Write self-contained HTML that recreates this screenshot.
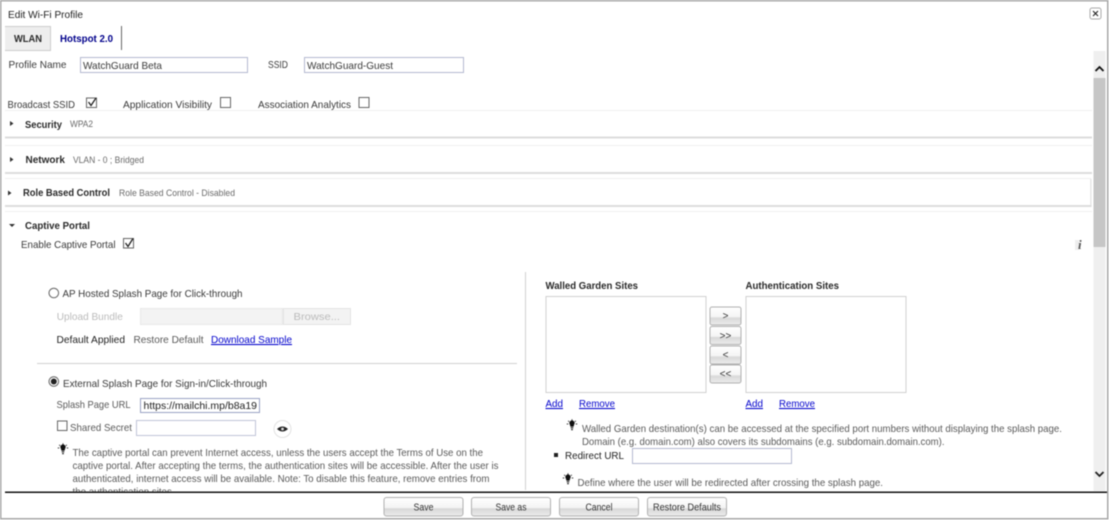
<!DOCTYPE html>
<html><head><meta charset="utf-8"><style>
html,body{margin:0;padding:0;background:#fff;width:1109px;height:520px;overflow:hidden}
svg{display:block;filter:blur(.45px)}
text{font-family:"Liberation Sans",sans-serif;font-size:10.500px;fill:#3a3a3a}
.b{font-weight:bold;fill:#2a2a2a}
.s{font-size:9.500px;fill:#6a6a6a}
.d{fill:#bbb}
.l{fill:#0000cc;text-decoration:underline}
.h{fill:#5a5a5a}
.bt{fill:#333;font-size:10px}
</style></head><body>
<svg width="1109" height="520" viewBox="0 0 1109 520" xmlns="http://www.w3.org/2000/svg">
<defs>
<linearGradient id="g" x1="0" y1="0" x2="0" y2="1"><stop offset="0" stop-color="#fff"/><stop offset=".56" stop-color="#f4f4f4"/><stop offset=".6" stop-color="#d8d8d8"/><stop offset="1" stop-color="#ececec"/></linearGradient>
<g id="bulb"><path d="M-2.200 -2.500a2.600 2.600 0 1 1 4.400 0l-.7 2.200h-3z" fill="#111"/><rect x="-1.300" y="0.300" width="2.600" height="1" fill="#111"/><rect x="-.8" y="2" width="1.600" height="1.200" fill="#111"/><path d="M-5.200 -3h1.400M3.800 -3h1.400M-3.800 -6.200l.9 1M3.800 -6.200l-.9 1M0 -7.800v1.300" stroke="#333" stroke-width=".9"/></g>
</defs>
<rect width="1109" height="520" fill="#fff"/>
<rect x=".75" y=".75" width="1107" height="518" fill="none" stroke="#a8a8a8" stroke-width="1.500"/>
<text x="8" y="18" textLength="75" lengthAdjust="spacingAndGlyphs" style="fill:#222">Edit Wi-Fi Profile</text>
<rect x="1090" y="8" width="11" height="11" rx="2" fill="#fff" stroke="#aaa"/>
<path d="M1093 11l5 5M1098 11l-5 5" stroke="#222" stroke-width="1.100"/>
<rect x="5" y="26" width="46" height="24.500" fill="#eee"/><path d="M5 26.500h46M50.500 26v24" stroke="#ccc"/>
<path d="M5 50.500h46" stroke="#ccc"/>
<text x="14" y="42" class="b" textLength="28" lengthAdjust="spacingAndGlyphs">WLAN</text>
<text x="60" y="42" class="b" textLength="53" lengthAdjust="spacingAndGlyphs" style="fill:#00008b">Hotspot 2.0</text>
<path d="M121.500 26v24" stroke="#666"/>
<text x="8.500" y="68" textLength="58" lengthAdjust="spacingAndGlyphs">Profile Name</text>
<rect x="80.500" y="57.500" width="167" height="15" fill="#fff" stroke="#b4b9d0"/>
<text x="83" y="69" textLength="79" lengthAdjust="spacingAndGlyphs">WatchGuard Beta</text>
<text x="268" y="68" textLength="20" lengthAdjust="spacingAndGlyphs">SSID</text>
<rect x="304.500" y="57.500" width="159" height="15" fill="#fff" stroke="#b4b9d0"/>
<text x="307" y="69" textLength="86" lengthAdjust="spacingAndGlyphs">WatchGuard-Guest</text>
<text x="7.500" y="108" textLength="67.500" lengthAdjust="spacingAndGlyphs">Broadcast SSID</text>
<rect x="86.500" y="98" width="10" height="9.500" fill="#fff" stroke="#666"/><path d="M88.500 102l2.500 3.500 5-7.500" fill="none" stroke="#222" stroke-width="1.300"/>
<text x="123" y="108" textLength="89" lengthAdjust="spacingAndGlyphs">Application Visibility</text>
<rect x="220.500" y="97.500" width="10" height="10" fill="#fff" stroke="#666"/>
<text x="258" y="108" textLength="93" lengthAdjust="spacingAndGlyphs">Association Analytics</text>
<rect x="359" y="97.500" width="10" height="10" fill="#fff" stroke="#666"/>
<path d="M5 110.500h1087" stroke="#f0f0f0"/>
<path d="M10 121l3.500 2.500-3.500 2.500z" fill="#333"/>
<text x="25" y="128" class="b" textLength="37" lengthAdjust="spacingAndGlyphs">Security</text>
<text x="70" y="127" class="s" textLength="23" lengthAdjust="spacingAndGlyphs">WPA2</text>
<rect x="5" y="136.500" width="1087" height="2" fill="#dcdcdc"/>
<path d="M5 145.500h1087" stroke="#f0f0f0"/>
<path d="M10 157l3.500 2.500-3.500 2.500z" fill="#333"/>
<text x="25.500" y="163" class="b" textLength="39.500" lengthAdjust="spacingAndGlyphs">Network</text>
<text x="73" y="163" class="s" textLength="71" lengthAdjust="spacingAndGlyphs">VLAN - 0 ; Bridged</text>
<rect x="5" y="172" width="1087" height="2" fill="#dcdcdc"/>
<path d="M5 178.500h1085.500v26" fill="none" stroke="#f0f0f0"/>
<path d="M1091 179v26" stroke="#e4e4e4"/>
<path d="M8 190.500l3.500 2.500-3.500 2.500z" fill="#333"/>
<text x="23" y="196" class="b" textLength="87" lengthAdjust="spacingAndGlyphs">Role Based Control</text>
<text x="119" y="196" class="s" textLength="116" lengthAdjust="spacingAndGlyphs">Role Based Control - Disabled</text>
<rect x="5" y="205" width="1086.500" height="2" fill="#dcdcdc"/>
<path d="M5 211.500h1087" stroke="#f0f0f0"/>
<path d="M9 224h6l-3 3z" fill="#333"/>
<text x="25" y="229" class="b" textLength="65" lengthAdjust="spacingAndGlyphs">Captive Portal</text>
<text x="21" y="248" textLength="94.500" lengthAdjust="spacingAndGlyphs">Enable Captive Portal</text>
<rect x="123.500" y="238.500" width="10" height="9.500" fill="#fff" stroke="#666"/><path d="M125.500 243l2.500 3.500 5-8" fill="none" stroke="#222" stroke-width="1.300"/>
<rect x="1075" y="240" width="4" height="10" fill="#eee"/>
<text x="1078" y="249" style="font-family:'Liberation Serif',serif;font-style:italic;font-weight:bold;font-size:13px;fill:#555">i</text>
<rect x="1093.500" y="51" width="12" height="440" fill="#efefef"/>
<rect x="1093.500" y="78" width="12" height="169" fill="#c6c6c6"/>
<path d="M1095.500 71l4-4 4 4" fill="none" stroke="#111" stroke-width="1.800"/>
<path d="M1095.500 472l4 4 4-4" fill="none" stroke="#222" stroke-width="1.800"/>
<circle cx="53.800" cy="293" r="4.800" fill="#fff" stroke="#666"/>
<text x="62.500" y="297" textLength="180" lengthAdjust="spacingAndGlyphs">AP Hosted Splash Page for Click-through</text>
<text x="56.800" y="320" class="d" textLength="66" lengthAdjust="spacingAndGlyphs">Upload Bundle</text>
<rect x="140.500" y="308.500" width="142" height="16" fill="#f3f3f3" stroke="#e8e8e8"/>
<rect x="283.500" y="308.500" width="67" height="16" fill="#f3f3f3" stroke="#e4e4e4"/>
<text x="293.500" y="320" class="d" textLength="46.500" lengthAdjust="spacingAndGlyphs">Browse...</text>
<text x="56.500" y="343" style="fill:#222" textLength="68.500" lengthAdjust="spacingAndGlyphs">Default Applied</text>
<text x="133.500" y="343" class="h" textLength="70" lengthAdjust="spacingAndGlyphs">Restore Default</text>
<text x="211" y="343" class="l" textLength="81" lengthAdjust="spacingAndGlyphs">Download Sample</text>
<path d="M37 363.500h480" stroke="#d0d0d0"/>
<circle cx="53.800" cy="381.500" r="4.800" fill="#fff" stroke="#666"/><circle cx="53.800" cy="381.500" r="3" fill="#222"/>
<text x="63" y="387" textLength="204" lengthAdjust="spacingAndGlyphs">External Splash Page for Sign-in/Click-through</text>
<text x="56.500" y="408" class="h" textLength="74" lengthAdjust="spacingAndGlyphs">Splash Page URL</text>
<rect x="140.500" y="398.500" width="119" height="14" fill="#fff" stroke="#9aa2c4"/>
<text x="143.500" y="409" style="fill:#222" textLength="113.500" lengthAdjust="spacingAndGlyphs">https://mailchi.mp/b8a19</text>
<rect x="57.500" y="421" width="9.500" height="9.500" fill="#fff" stroke="#666"/>
<text x="70" y="431" class="h" textLength="62" lengthAdjust="spacingAndGlyphs">Shared Secret</text>
<rect x="136.500" y="420.500" width="119" height="15" fill="#fff" stroke="#c0c4d8"/>
<circle cx="282.500" cy="429" r="8.500" fill="#fff" stroke="#e2e2e2"/>
<path d="M277 429q5.500-5 11 0q-5.500 5-11 0z" fill="#222"/><circle cx="282.500" cy="429" r="1.400" fill="#ddd"/>
<use href="#bulb" x="63" y="451"/>
<text x="72.500" y="456" class="h" textLength="410.500" lengthAdjust="spacingAndGlyphs">The captive portal can prevent Internet access, unless the users accept the Terms of Use on the</text>
<text x="72.500" y="469" class="h" textLength="426" lengthAdjust="spacingAndGlyphs">captive portal. After accepting the terms, the authentication sites will be accessible. After the user is</text>
<text x="72.500" y="482" class="h" textLength="417" lengthAdjust="spacingAndGlyphs">authenticated, internet access will be available. Note: To disable this feature, remove entries from</text>
<text x="72.500" y="495" class="h" textLength="102" lengthAdjust="spacingAndGlyphs">the authentication sites.</text>
<path d="M525.500 272v218" stroke="#d0d0d0"/>
<text x="545.500" y="289" class="b" textLength="92.500" lengthAdjust="spacingAndGlyphs">Walled Garden Sites</text>
<text x="745.500" y="289" class="b" textLength="93.500" lengthAdjust="spacingAndGlyphs">Authentication Sites</text>
<rect x="546" y="296.500" width="160" height="96" fill="#fff" stroke="#d0d0d0"/>
<rect x="746" y="296.500" width="160" height="96" fill="#fff" stroke="#d0d0d0"/>
<rect x="710" y="307" width="31" height="18" rx="2" fill="url(#g)" stroke="#b0b0b0"/>
<rect x="710" y="326.500" width="31" height="18" rx="2" fill="url(#g)" stroke="#b0b0b0"/>
<rect x="710" y="346" width="31" height="18" rx="2" fill="url(#g)" stroke="#b0b0b0"/>
<rect x="710" y="365" width="31" height="18" rx="2" fill="url(#g)" stroke="#b0b0b0"/>
<text x="725.500" y="319" class="bt" text-anchor="middle">&gt;</text>
<text x="725.500" y="339" class="bt" text-anchor="middle">&gt;&gt;</text>
<text x="725.500" y="358" class="bt" text-anchor="middle">&lt;</text>
<text x="725.500" y="377" class="bt" text-anchor="middle">&lt;&lt;</text>
<text x="545.500" y="407" class="l" textLength="17.500" lengthAdjust="spacingAndGlyphs">Add</text>
<text x="579" y="407" class="l" textLength="36" lengthAdjust="spacingAndGlyphs">Remove</text>
<text x="745.500" y="407" class="l" textLength="17.500" lengthAdjust="spacingAndGlyphs">Add</text>
<text x="779" y="407" class="l" textLength="36" lengthAdjust="spacingAndGlyphs">Remove</text>
<use href="#bulb" x="572" y="427"/>
<text x="582" y="432" class="h" textLength="480" lengthAdjust="spacingAndGlyphs">Walled Garden destination(s) can be accessed at the specified port numbers without displaying the splash page.</text>
<text x="582" y="445" class="h" textLength="362.500" lengthAdjust="spacingAndGlyphs">Domain (e.g. domain.com) also covers its subdomains (e.g. subdomain.domain.com).</text>
<rect x="554" y="453" width="4" height="4" fill="#222"/>
<text x="565" y="459" style="fill:#222" textLength="59" lengthAdjust="spacingAndGlyphs">Redirect URL</text>
<rect x="632.500" y="448.500" width="159" height="15" fill="#fff" stroke="#b4b9d0"/>
<use href="#bulb" x="568" y="481"/>
<text x="577.500" y="486" class="h" textLength="305.500" lengthAdjust="spacingAndGlyphs">Define where the user will be redirected after crossing the splash page.</text>
<rect x="1.500" y="492" width="1105.500" height="26" fill="#fff"/>
<rect x="5" y="491.500" width="1102" height="1.500" fill="#111"/>
<rect x="384" y="497.500" width="79" height="18.500" rx="2.500" fill="url(#g)" stroke="#b0b0b0"/>
<rect x="471.500" y="497.500" width="79" height="18.500" rx="2.500" fill="url(#g)" stroke="#b0b0b0"/>
<rect x="559.500" y="497.500" width="79" height="18.500" rx="2.500" fill="url(#g)" stroke="#b0b0b0"/>
<rect x="647.500" y="497.500" width="79" height="18.500" rx="2.500" fill="url(#g)" stroke="#b0b0b0"/>
<text x="423.500" y="510.500" class="bt" text-anchor="middle" textLength="20" lengthAdjust="spacingAndGlyphs">Save</text>
<text x="511" y="510.500" class="bt" text-anchor="middle" textLength="31" lengthAdjust="spacingAndGlyphs">Save as</text>
<text x="599" y="510.500" class="bt" text-anchor="middle" textLength="27" lengthAdjust="spacingAndGlyphs">Cancel</text>
<text x="687" y="510.500" class="bt" text-anchor="middle" textLength="68" lengthAdjust="spacingAndGlyphs">Restore Defaults</text>
</svg>
</body></html>
